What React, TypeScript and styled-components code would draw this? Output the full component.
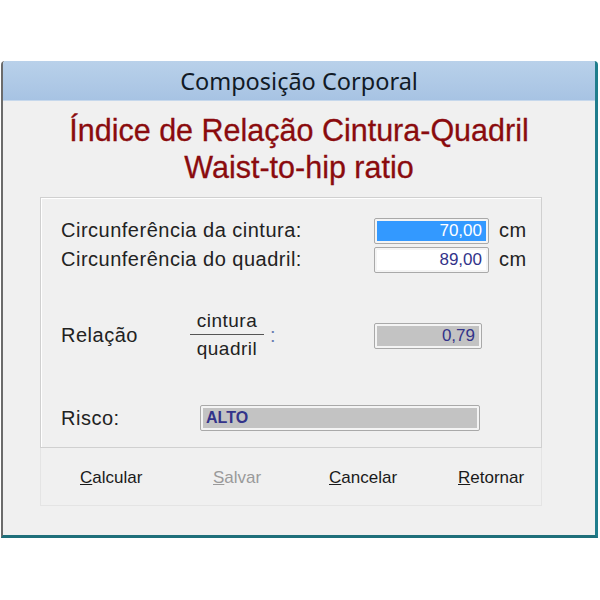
import styled, { createGlobalStyle } from "styled-components";

const GlobalStyle = createGlobalStyle`
  html, body {
    margin: 0;
    padding: 0;
    background: #ffffff;
  }
  body {
    font-family: "Liberation Sans", Arial, sans-serif;
  }
`;

const Page = styled.div`
  width: 600px;
  height: 600px;
  padding-top: 61px;
  box-sizing: border-box;
`;

const Window = styled.div`
  width: 597px;
  height: 477px;
  margin-left: 1px;
  box-sizing: border-box;
  border-left: 2px solid #6b6b6b;
  border-right: 3px solid #1f7d8c;
  border-bottom: 3px solid #1f6f7a;
  background: #f0f0f0;
  display: flex;
  flex-direction: column;
  border-top-left-radius: 4px;
  border-top-right-radius: 4px;
  overflow: hidden;
`;

const TitleBar = styled.div`
  height: 39px;
  background: linear-gradient(#b9d1ea, #a7c3e3);
  border-bottom: 1px solid #c6d8ec;
  display: flex;
  align-items: center;
  justify-content: center;
  font-size: 23.5px;
  color: #111a26;
  font-family: "Noto Sans", "Liberation Sans", sans-serif;
`;

const Heading = styled.div`
  text-align: center;
  color: #8a0b0e;
  font-size: 30.5px;
  line-height: 37px;
  margin-top: 11px;
  -webkit-text-stroke: 0.3px #8a0b0e;
`;

const Group = styled.div`
  margin: 11px 0 0 37px;
  width: 502px;
  height: 251px;
  box-sizing: border-box;
  border: 1px solid #d0d0d0;
  box-shadow: inset 1px 1px 0 #ffffff;
  padding: 18px 0 0 20px;
  font-size: 20px;
  letter-spacing: 0.5px;
  color: #222;
`;

const FieldRow = styled.div`
  display: flex;
  align-items: center;
  height: 29px;
`;

const Label = styled.div<{ $w: number }>`
  width: ${p => p.$w}px;
`;

const Box = styled.div<{ $w: number; $tone: "sel" | "white" | "gray" }>`
  width: ${p => p.$w}px;
  height: 26px;
  box-sizing: border-box;
  border: 1px solid #a9a9a9;
  border-radius: 2px;
  padding: 2px;
  background: #f4f4f4;
  letter-spacing: 0;
  & > span {
    display: flex;
    align-items: center;
    justify-content: flex-end;
    height: 100%;
    padding-right: 4px;
    font-size: 17px;
    background: ${p =>
      p.$tone === "sel" ? "#3399ff" : p.$tone === "white" ? "#ffffff" : "#c3c3c3"};
    color: ${p => (p.$tone === "sel" ? "#ffffff" : "#33338a")};
  }
`;

const Unit = styled.div`
  margin-left: 10px;
`;

const RatioRow = styled.div`
  display: flex;
  align-items: center;
  margin-top: 34px;
`;

const Fraction = styled.div`
  display: flex;
  flex-direction: column;
  align-items: center;
  width: 74px;
  font-size: 19px;
  line-height: 28px;
  & > span:first-child {
    border-bottom: 1px solid #555;
    width: 100%;
    text-align: center;
    line-height: 26px;
  }
`;

const Colon = styled.div`
  color: #6a7fb0;
  margin: 0 0 0 6px;
  width: 104px;
`;

const RiskBox = styled(Box)`
  & > span {
    justify-content: flex-start;
    padding-left: 3px;
    font-weight: bold;
    font-size: 16px;
  }
`;

const RiskRow = styled.div`
  display: flex;
  align-items: center;
  margin-top: 42px;
`;

const ButtonBar = styled.div`
  margin-left: 37px;
  width: 502px;
  height: 58px;
  box-sizing: border-box;
  border: 1px solid #e4e4e4;
  border-top: none;
  display: flex;
  align-items: center;
  padding: 3px 0 0 39px;
  font-size: 17px;
`;

const Btn = styled.div<{ $disabled?: boolean; $w: number }>`
  width: ${p => p.$w}px;
  color: ${p => (p.$disabled ? "#9a9a9a" : "#1a1a1a")};
  & > u {
    text-decoration: underline;
  }
`;

export default function App() {
  return (
    <Page>
      <GlobalStyle />
      <Window>
        <TitleBar>Composição Corporal</TitleBar>
        <Heading>
          Índice de Relação Cintura-Quadril
          <br />
          Waist-to-hip ratio
        </Heading>
        <Group>
          <FieldRow>
            <Label $w={313}>Circunferência da cintura:</Label>
            <Box $w={115} $tone="sel"><span>70,00</span></Box>
            <Unit>cm</Unit>
          </FieldRow>
          <FieldRow>
            <Label $w={313}>Circunferência do quadril:</Label>
            <Box $w={115} $tone="white"><span>89,00</span></Box>
            <Unit>cm</Unit>
          </FieldRow>
          <RatioRow>
            <Label $w={129}>Relação</Label>
            <Fraction>
              <span>cintura</span>
              <span>quadril</span>
            </Fraction>
            <Colon>:</Colon>
            <Box $w={108} $tone="gray"><span>0,79</span></Box>
          </RatioRow>
          <RiskRow>
            <Label $w={139}>Risco:</Label>
            <RiskBox $w={280} $tone="gray"><span>ALTO</span></RiskBox>
          </RiskRow>
        </Group>
        <ButtonBar>
          <Btn $w={133}><u>C</u>alcular</Btn>
          <Btn $w={116} $disabled><u>S</u>alvar</Btn>
          <Btn $w={129}><u>C</u>ancelar</Btn>
          <Btn $w={80}><u>R</u>etornar</Btn>
        </ButtonBar>
      </Window>
    </Page>
  );
}
